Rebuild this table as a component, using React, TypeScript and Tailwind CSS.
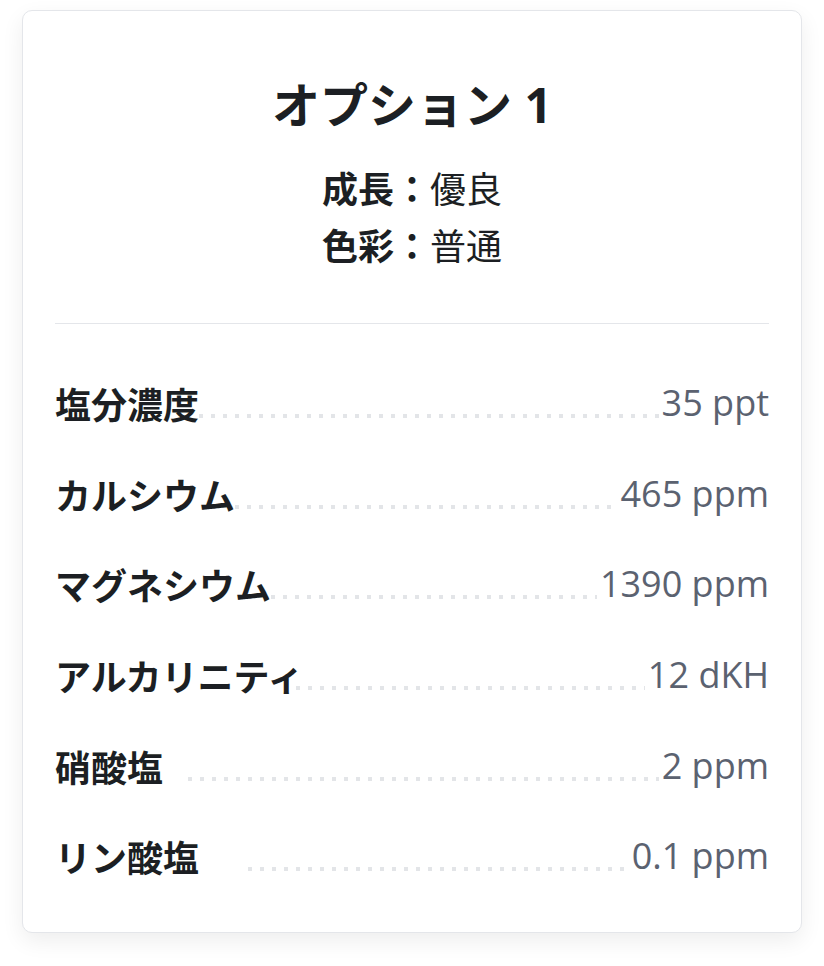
const rows = [
  { label: "塩分濃度", value: "35 ppt", lead: "ml-0" },
  { label: "カルシウム", value: "465 ppm", lead: "ml-0" },
  { label: "マグネシウム", value: "1390 ppm", lead: "ml-0" },
  { label: "アルカリニティ", value: "12 dKH", lead: "-ml-[7px]" },
  { label: "硝酸塩", value: "2 ppm", lead: "ml-[25px]" },
  { label: "リン酸塩", value: "0.1 ppm", lead: "ml-[49px]" },
]

function StatRow({
  label,
  value,
  lead,
}: {
  label: string
  value: string
  lead: string
}) {
  return (
    <div className="flex items-center h-[90.6px]">
      <span className="text-[36px] leading-[56px] font-bold text-[#1c1f23] font-['Noto_Sans_CJK_JP',sans-serif] whitespace-nowrap">
        {label}
      </span>
      <span
        className={`flex-1 h-[4px] mt-[26px] mr-[3px] bg-[linear-gradient(to_right,#e3e5e8_4px,transparent_4px)] bg-[length:12px_4px] bg-repeat-x ${lead}`}
      />
      <span className="text-[36px] leading-[56px] text-[#5b6270] font-['Open_Sans',sans-serif] whitespace-nowrap">
        {value}
      </span>
    </div>
  )
}

export default function App() {
  return (
    <div className="min-h-screen bg-white pt-[10px] px-[22px] font-['Open_Sans','Noto_Sans_CJK_JP',sans-serif]">
      <div className="bg-white border border-[#e4e6ea] rounded-[10px] shadow-[0_8px_22px_rgba(0,0,0,0.07)] px-8 pt-[62px] pb-[30px]">
        <div className="text-center text-[#1c1f23]">
          <h1 className="text-[48px] leading-[64px] font-bold">オプション 1</h1>
          <div className="mt-[22px] text-[36px] leading-[57px] font-['Noto_Sans_CJK_JP',sans-serif]">
            <p>
              <span className="font-bold">成長：</span>優良
            </p>
            <p>
              <span className="font-bold">色彩：</span>普通
            </p>
          </div>
        </div>

        <div className="mt-[50px] h-px bg-[#e4e6ea]" />

        <div className="mt-[34px]">
          {rows.map(r => (
            <StatRow key={r.label} label={r.label} value={r.value} lead={r.lead} />
          ))}
        </div>
      </div>
    </div>
  )
}
